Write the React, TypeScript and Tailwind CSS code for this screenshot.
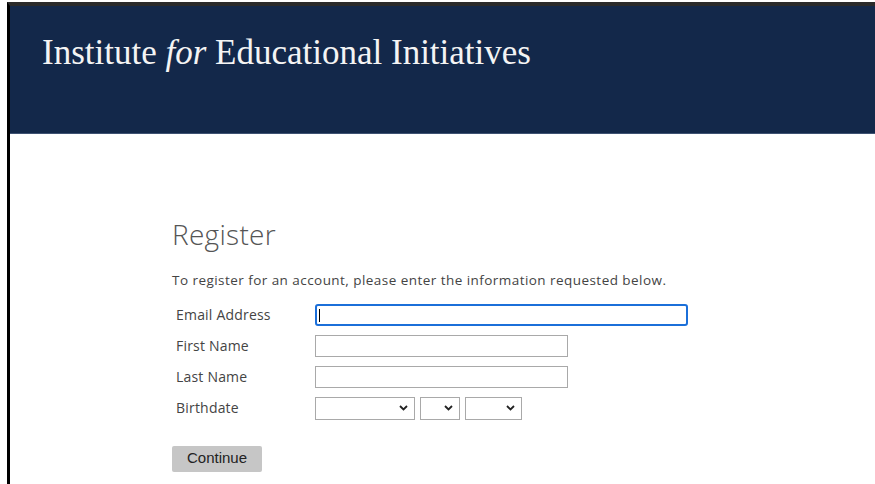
import React from 'react';

const fieldLabel = 'text-[14px] leading-none tracking-[0.2px] text-[#444444]';

// Small chevron used in the birthdate dropdowns
function Chevron() {
  return (
    <svg width="9" height="6" viewBox="0 0 9 6" className="pointer-events-none absolute right-[7px] top-1/2 -translate-y-1/2">
      <path d="M1 1l3.5 3.5L8 1" fill="none" stroke="#222" strokeWidth="1.8" />
    </svg>
  );
}

function DateSelect({ width }: { width: string }) {
  return (
    <div className={`relative h-[23px] ${width}`}>
      <select className="h-full w-full appearance-none border border-[#a9a9a9] bg-white" defaultValue="">
        <option value=""></option>
      </select>
      <Chevron />
    </div>
  );
}

export default function App() {
  return (
    <div className="min-h-screen bg-white pl-[7px] pt-[2px]" style={{ fontFamily: '"Open Sans", Lato, sans-serif' }}>
      <div className="min-h-[482px] border-l-[3px] border-t-[4px] border-l-black border-t-[#2a2a2a]">
        <header className="box-border h-[128px] border-b border-[#3e5272] bg-[#13284a] pl-[32px] pt-[29px]">
          <h1
            className="text-[35px] leading-none text-[#f4f4f4]"
            style={{ fontFamily: '"Liberation Serif", serif' }}
          >
            Institute <em>for</em> Educational Initiatives
          </h1>
        </header>

        <main className="pl-[162px] pt-[86px]">
          <h2 className="text-[28px] font-light leading-none tracking-[0.3px] text-[#555555]">Register</h2>
          <p className="mt-[26px] text-[13.5px] leading-none tracking-[0.45px] text-[#444444]">
            To register for an account, please enter the information requested below.
          </p>

          <div className="mt-[12px] flex flex-col">
            <div className="flex h-[31px] items-center">
              <span className={`w-[143px] pl-[4px] ${fieldLabel}`}>Email Address</span>
              <div className="relative h-[22px] w-[373px] rounded-[3px] border-2 border-[#1b6fd9]">
                <span className="absolute left-[2px] top-[3px] h-[13px] w-px bg-black" />
              </div>
            </div>
            <div className="flex h-[31px] items-center">
              <span className={`w-[143px] pl-[4px] ${fieldLabel}`}>First Name</span>
              <input className="h-[22px] w-[253px] border border-[#a9a9a9]" />
            </div>
            <div className="flex h-[31px] items-center">
              <span className={`w-[143px] pl-[4px] ${fieldLabel}`}>Last Name</span>
              <input className="h-[22px] w-[253px] border border-[#a9a9a9]" />
            </div>
            <div className="flex h-[31px] items-center">
              <span className={`w-[143px] pl-[4px] ${fieldLabel}`}>Birthdate</span>
              <div className="flex gap-[5px]">
                <DateSelect width="w-[100px]" />
                <DateSelect width="w-[40px]" />
                <DateSelect width="w-[57px]" />
              </div>
            </div>
          </div>

          <button
            className="mt-[22px] h-[26px] w-[90px] rounded-[2px] bg-[#c6c6c6] text-[15px] text-[#222222]"
            style={{ fontFamily: '"Liberation Sans", Arial, sans-serif' }}
          >
            Continue
          </button>
        </main>
      </div>
    </div>
  );
}
